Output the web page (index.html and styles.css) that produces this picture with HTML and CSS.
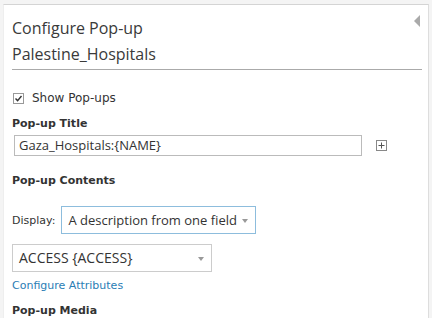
FILE: index.html
```html
<!DOCTYPE html>
<html lang="en">
<head>
    <meta charset="UTF-8">
    <title>Configure Pop-up</title>
    <link rel="stylesheet" href="styles.css">
</head>
<body>
    <div class="panel">
        <div class="head">
            <div class="titles">
                <div class="title">Configure Pop-up</div>
                <div class="title">Palestine_Hospitals</div>
            </div>
            <span class="collapse"></span>
        </div>

        <label class="check">
            <span class="box">
                <svg width="9" height="9" viewBox="0 0 9 9"><path d="M1.5 4.5 L3.6 6.6 L7.5 2" fill="none" stroke="#333" stroke-width="1.4"/></svg>
            </span>
            Show Pop-ups
        </label>

        <div class="label">Pop-up Title</div>
        <div class="title-row">
            <div class="input">Gaza_Hospitals:{NAME}</div>
            <span class="plus">
                <svg width="11" height="11" viewBox="0 0 11 11"><rect x="0.5" y="0.5" width="10" height="10" fill="none" stroke="#888"/><path d="M5.5 2.5 V8.5 M2.5 5.5 H8.5" stroke="#555"/></svg>
            </span>
        </div>

        <div class="label contents">Pop-up Contents</div>
        <div class="display-row">
            <span class="small">Display:</span>
            <div class="select active">A description from one field<span class="arrow"></span></div>
        </div>

        <div class="select field">ACCESS {ACCESS}<span class="arrow"></span></div>

        <a class="link" href="#">Configure Attributes</a>

        <div class="label media">Pop-up Media</div>
    </div>
</body>
</html>
```

FILE: styles.css
```css
body {
    margin: 0;
    font-family: "Open Sans", "Noto Sans", sans-serif;
    color: #333;
    background: #f4f4f4;
    overflow: hidden;
}
.panel {
    background: white;
    margin: 4px 3px 0 3px;
    border-top: 1px solid #d4d4d4;
    border-left: 1px solid #eee;
    border-right: 1px solid #ddd;
    height: 320px;
    padding: 0 6px 0 8px;
}
.head {
    display: flex;
    justify-content: space-between;
    border-bottom: 1px solid #aaa;
    padding-bottom: 2px;
}
.titles {
    padding-top: 10px;
}
.title {
    font-size: 16px;
    line-height: 26px;
    color: #3a3a3a;
}
.collapse {
    width: 0;
    height: 0;
    border-top: 6px solid transparent;
    border-bottom: 6px solid transparent;
    border-right: 6px solid #aaa;
    margin: 10px 2px 0 0;
}
.check {
    display: flex;
    align-items: center;
    font-family: "DejaVu Sans", Verdana, sans-serif;
    font-size: 12px;
    line-height: 14px;
    margin-top: 21px;
    gap: 8px;
}
.box {
    width: 9px;
    height: 9px;
    border: 1px solid #999;
    display: flex;
    margin-left: 1px;
}
.label {
    font-family: "DejaVu Sans", Verdana, sans-serif;
    font-size: 11px;
    line-height: 14px;
    font-weight: bold;
    margin-top: 12px;
}
.title-row {
    display: flex;
    align-items: center;
    margin-top: 4px;
}
.input {
    width: 342px;
    height: 19px;
    border: 1px solid #bbb;
    font-size: 13px;
    line-height: 19px;
    padding-left: 4px;
    margin-left: 2px;
}
.plus {
    display: flex;
    margin-left: 14px;
}
.contents {
    margin-top: 18px;
}
.display-row {
    display: flex;
    align-items: center;
    gap: 6px;
    margin-top: 18px;
}
.small {
    font-family: "DejaVu Sans", Verdana, sans-serif;
    font-size: 11px;
}
.select {
    position: relative;
    height: 26px;
    border: 1px solid #ccc;
    font-size: 13px;
    line-height: 26px;
    padding-left: 6px;
}
.select.active {
    width: 187px;
    border-color: #8dbddd;
}
.select.field {
    width: 192px;
    margin-top: 10px;
    font-size: 14px;
}
.arrow {
    position: absolute;
    right: 7px;
    top: 12px;
    width: 0;
    height: 0;
    border-left: 3.5px solid transparent;
    border-right: 3.5px solid transparent;
    border-top: 4px solid #999;
}
.link {
    display: block;
    font-family: "DejaVu Sans", Verdana, sans-serif;
    color: #2a7db5;
    text-decoration: none;
    font-size: 11px;
    line-height: 14px;
    margin-top: 7px;
}
.media {
    margin-top: 11px;
}
```
